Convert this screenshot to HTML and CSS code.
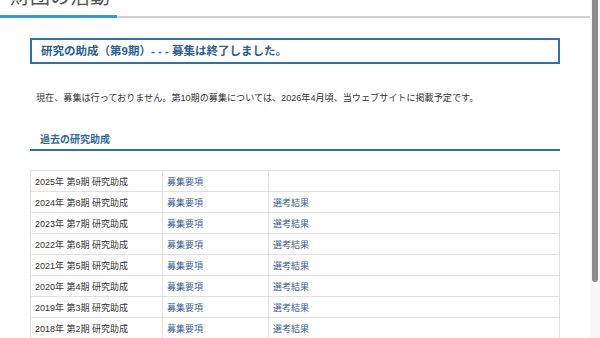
FILE: index.html
```html
<!DOCTYPE html>
<html lang="ja">
<head>
    <meta charset="UTF-8">
    <meta name="viewport" content="width=device-width, initial-scale=1.0">
    <title>財団の活動</title>
    <link rel="stylesheet" href="styles.css">
</head>
<body>
    <header class="pageHead">
        <h1 class="pageTitle">財団の活動</h1>
        <div class="headLine"><span class="headLineAccent"></span></div>
    </header>
    <main class="content">
        <div class="noticeBox">
            <p class="noticeTitle">研究の助成（第9期）- - - 募集は終了しました。</p>
        </div>
        <p class="noticeText">現在、募集は行っておりません。第10期の募集については、2026年4月頃、当ウェブサイトに掲載予定です。</p>

        <h2 class="sectionTitle">過去の研究助成</h2>
        <table class="historyTable">
            <tr><td class="colName">2025年 第9期 研究助成</td><td class="colLink"><a href="#">募集要項</a></td><td></td></tr>
            <tr><td class="colName">2024年 第8期 研究助成</td><td class="colLink"><a href="#">募集要項</a></td><td><a href="#">選考結果</a></td></tr>
            <tr><td class="colName">2023年 第7期 研究助成</td><td class="colLink"><a href="#">募集要項</a></td><td><a href="#">選考結果</a></td></tr>
            <tr><td class="colName">2022年 第6期 研究助成</td><td class="colLink"><a href="#">募集要項</a></td><td><a href="#">選考結果</a></td></tr>
            <tr><td class="colName">2021年 第5期 研究助成</td><td class="colLink"><a href="#">募集要項</a></td><td><a href="#">選考結果</a></td></tr>
            <tr><td class="colName">2020年 第4期 研究助成</td><td class="colLink"><a href="#">募集要項</a></td><td><a href="#">選考結果</a></td></tr>
            <tr><td class="colName">2019年 第3期 研究助成</td><td class="colLink"><a href="#">募集要項</a></td><td><a href="#">選考結果</a></td></tr>
            <tr><td class="colName">2018年 第2期 研究助成</td><td class="colLink"><a href="#">募集要項</a></td><td><a href="#">選考結果</a></td></tr>
        </table>
    </main>
    <div class="scrollBar"><span class="scrollThumb"></span></div>
</body>
</html>
```

FILE: styles.css
```css
*{
    margin: 0; padding: 0;
    box-sizing: border-box;
}
html{
    font-family: "Liberation Sans", "Noto Sans CJK JP", sans-serif;
    color: #333;
}
body{
    background-color: #fff;
    margin-right: 10px;
}

/* スクロールバー */
.scrollBar{
    position: fixed;
    top: 0;
    right: 0;
    width: 10px;
    height: 100vh;
    background-color: #f7f7f7;
    padding: 0 2px;
}
.scrollThumb{
    display: block;
    height: 282px;
    background-color: #8c8c8c;
    border-radius: 0 0 3px 3px;
}

/* 見出し */
.pageHead{
    overflow: hidden;
}
.pageTitle{
    font-size: 20px;
    line-height: 24px;
    font-weight: 400;
    color: #555;
    margin: -15px 0 0 10px;
}
.headLine{
    display: flex;
    align-items: flex-end;
    height: 3px;
    margin-top: 6px;
    border-bottom: 2px solid #d0d0d0;
}
.headLineAccent{
    width: 117px;
    height: 3px;
    margin-bottom: -2px;
    background-color: #3f93d8;
}

/* 本文 */
.content{
    margin: 20px 30px 0;
}
.noticeBox{
    border: 2px solid #2c72b2;
    padding: 0 9px;
}
.noticeTitle{
    font-size: 11.5px;
    line-height: 22px;
    font-weight: 700;
    color: #2d5f91;
}
.noticeText{
    font-size: 9.1px;
    line-height: 16px;
    margin-top: 26px;
    padding-left: 6px;
}
.sectionTitle{
    font-size: 10px;
    line-height: 14px;
    font-weight: 700;
    color: #32689c;
    margin-top: 27px;
    padding: 0 0 2px 10px;
    border-bottom: 2px solid #2c72b2;
}

/* 表 */
.historyTable{
    width: 100%;
    margin-top: 19px;
    border-collapse: collapse;
    font-size: 9px;
}
.historyTable td{
    height: 21px;
    padding: 0 4px;
    border: 1px solid #e0e0e0;
    vertical-align: middle;
}
.colName{
    width: 132px;
}
.colLink{
    width: 106px;
}
.historyTable a{
    color: #3a5f98;
    text-decoration: none;
}
```
